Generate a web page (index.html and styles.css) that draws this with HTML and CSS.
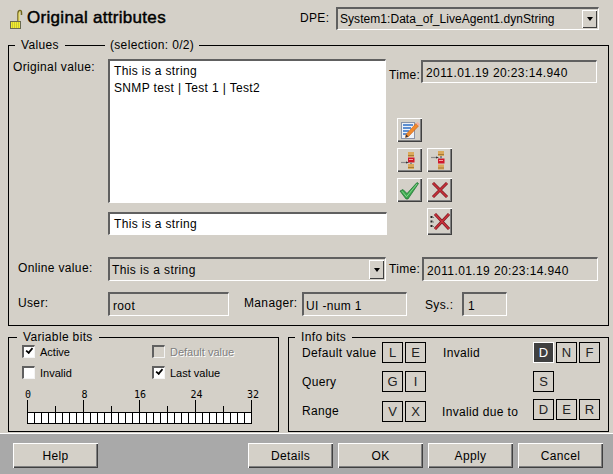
FILE: index.html
```html
<!DOCTYPE html>
<html lang="en">
<head>
<meta charset="utf-8">
<title>Original attributes</title>
<link rel="stylesheet" href="styles.css">
</head>
<body>
<div class="dialog">
  <div class="main">
    <header class="header">
      <svg class="lock" width="14" height="20" viewBox="0 0 14 20">
        <path d="M9 12V4.500C9 2.500 10 1.500 11 1.500S12.500 2.500 12.500 4V6" fill="none" stroke="#6f6420" stroke-width="1.500"/>
        <path d="M10 12V5C10 3.500 10.500 2.500 11.300 2.500" fill="none" stroke="#f6e84a" stroke-width="1"/>
        <rect x="1.500" y="12.500" width="10" height="7" fill="#f2ee30" stroke="#6a6a50"/>
        <path d="M3 14h7M3 16h7M3 18h7" stroke="#a8a430" stroke-width="1" stroke-dasharray="1 1"/>
      </svg>
      <h1 class="title">Original attributes</h1>
      <span class="dpe-label">DPE:</span>
      <div class="combo combo-dpe"><span class="combo-text">System1:Data_of_LiveAgent1.dynString</span><span class="arrow"></span></div>
    </header>

    <section class="group values">
      <div class="legend"><span class="leg-a">Values</span><span class="leg-b">(selection: 0/2)</span></div>
      <div class="row-orig">
        <span class="lbl-orig">Original value:</span>
        <div class="orig-col">
          <div class="textarea"><div>This is a string</div><div>SNMP test | Test 1 | Test2</div></div>
          <div class="input">This is a string</div>
        </div>
        <div class="side">
          <div class="time-row"><span class="lbl-time">Time:</span><div class="field time-field">2011.01.19 20:23:14.940</div></div>
          <div class="tools">
            <button class="tool t-edit" type="button">
              <svg width="25" height="24" viewBox="0 0 25 24">
                <rect x="4.500" y="4.500" width="13" height="16" fill="#eef2f8" stroke="#8a94a8"/>
                <path d="M6 7h10M6 10h8M6 13h6M6 16h4" stroke="#2f6fc4" stroke-width="1.600"/>
                <path d="M9 16.500L19 5.500l2.500 2.500-10 10.500-3 1z" fill="#f08a2c" stroke="#c85a10" stroke-width=".6"/>
                <path d="M19 5.500L20.500 4 23 6.500 21.500 8z" fill="#f4b0a0"/>
                <path d="M8.500 19.500l.7-3 2.200 2z" fill="#333"/>
              </svg>
            </button>
            <span class="tool-gap"></span>
            <button class="tool t-conn1" type="button">
              <svg width="25" height="24" viewBox="0 0 25 24">
                <rect x="11" y="4" width="6" height="5" fill="#dba95a"/>
                <rect x="11" y="7" width="6" height="1" fill="#a67a38"/>
                <rect x="11" y="9.500" width="6.500" height="5" fill="#d0182a"/>
                <rect x="12" y="11" width="4" height="1" fill="#f4a0a0"/>
                <rect x="11" y="16" width="6" height="5" fill="#dba95a"/>
                <rect x="11" y="19" width="6" height="1" fill="#a67a38"/>
                <path d="M14 14.500V16" stroke="#888" stroke-width="2"/>
                <path d="M4 14.500h6" stroke="#8a8a8a" stroke-width="1.200"/>
                <path d="M9 13.500l3 1-3 1z" fill="#333"/>
              </svg>
            </button>
            <button class="tool t-conn2" type="button">
              <svg width="25" height="24" viewBox="0 0 25 24">
                <rect x="11" y="3" width="6" height="5" fill="#dba95a"/>
                <rect x="11" y="6" width="6" height="1" fill="#a67a38"/>
                <rect x="11" y="10.500" width="6.500" height="5" fill="#d0182a"/>
                <rect x="12" y="12" width="4" height="1" fill="#f4a0a0"/>
                <rect x="11" y="16.500" width="6" height="5" fill="#dba95a"/>
                <rect x="11" y="19.500" width="6" height="1" fill="#a67a38"/>
                <path d="M14 8v2.500" stroke="#888" stroke-width="2"/>
                <path d="M4 9.500h6" stroke="#8a8a8a" stroke-width="1.200"/>
                <path d="M9 8.500l3 1-3 1z" fill="#333"/>
              </svg>
            </button>
            <button class="tool t-ok" type="button">
              <svg width="25" height="24" viewBox="0 0 25 24">
                <path d="M3 13l3-1.500 4 4 10-11 1.500 1L11 21h-2z" fill="#3aa84c" stroke="#1c6c30" stroke-width=".7"/>
                <path d="M5 13.200l4.500 5.500L20 6" fill="none" stroke="#a6e4a8" stroke-width=".7"/>
              </svg>
            </button>
            <button class="tool t-x" type="button">
              <svg width="25" height="24" viewBox="0 0 25 24">
                <path d="M6 5l14 14M20 5L6 19" stroke="#7a1c22" stroke-width="3"/>
                <path d="M6 5l14 14M20 5L6 19" stroke="#c8303a" stroke-width="1.600"/>
              </svg>
            </button>
            <span class="tool-gap"></span>
            <button class="tool tool-tall t-xd" type="button">
              <svg width="25" height="27" viewBox="0 0 25 27">
                <path d="M8 6l14 15M22 6L8 21" stroke="#7a1c22" stroke-width="3"/>
                <path d="M8 6l14 15M22 6L8 21" stroke="#cc303a" stroke-width="1.600"/>
                <path d="M4.500 8v2M4.500 12.500v2M4.500 17v2" stroke="#222" stroke-width="2"/>
                <path d="M6.500 9v1M6.500 13.500v1M6.500 18v1" stroke="#777" stroke-width="1"/>
              </svg>
            </button>
          </div>
        </div>
      </div>
      <div class="row-online">
        <span class="lbl-online">Online value:</span>
        <div class="combo combo-online"><span class="combo-text">This is a string</span><span class="arrow"></span></div>
        <span class="lbl-time">Time:</span>
        <div class="field time-field2">2011.01.19 20:23:14.940</div>
      </div>
      <div class="row-user">
        <span class="lbl-user">User:</span>
        <div class="field f-user">root</div>
        <span class="lbl-mgr">Manager:</span>
        <div class="field f-mgr">UI -num 1</div>
        <span class="lbl-sys">Sys.:</span>
        <div class="field f-sys">1</div>
      </div>
    </section>

    <div class="bottom">
      <section class="group varbits">
        <div class="legend legend-var"><span class="leg-a">Variable bits</span></div>
        <div class="checks">
          <label class="check"><span class="box on"></span>Active</label>
          <label class="check off"><span class="box dis"></span>Default value</label>
          <label class="check"><span class="box"></span>Invalid</label>
          <label class="check"><span class="box on"></span>Last value</label>
        </div>
        <svg class="ruler" width="240" height="36" viewBox="0 0 240 36">
          <g class="ruler-text">
            <text x="4" y="9" text-anchor="middle">0</text>
            <text x="60.500" y="9" text-anchor="middle">8</text>
            <text x="116" y="9" text-anchor="middle">16</text>
            <text x="172.500" y="9" text-anchor="middle">24</text>
            <text x="229" y="9" text-anchor="middle">32</text>
          </g>
          <rect x="3.500" y="23.500" width="224" height="11" fill="#fff" stroke="#000"/>
          <path d="M3.500 11v13M59.500 11v13M115.500 11v13M171.500 11v13M227.500 11v13M31.500 17v7M87.500 17v7M143.500 17v7M199.500 17v7" stroke="#000"/>
          <path d="M10.500 24v11M17.500 24v11M24.500 24v11M31.500 24v11M38.500 24v11M45.500 24v11M52.500 24v11M59.500 24v11M66.500 24v11M73.500 24v11M80.500 24v11M87.500 24v11M94.500 24v11M101.500 24v11M108.500 24v11M115.500 24v11M122.500 24v11M129.500 24v11M136.500 24v11M143.500 24v11M150.500 24v11M157.500 24v11M164.500 24v11M171.500 24v11M178.500 24v11M185.500 24v11M192.500 24v11M199.500 24v11M206.500 24v11M213.500 24v11M220.500 24v11" stroke="#000"/>
        </svg>
      </section>

      <section class="group infobits">
        <div class="legend"><span class="leg-a">Info bits</span></div>
        <div class="info-left">
          <div class="info-row"><span class="info-lbl">Default value</span><span class="bit">L</span><span class="bit">E</span></div>
          <div class="info-row r2"><span class="info-lbl">Query</span><span class="bit">G</span><span class="bit">I</span></div>
          <div class="info-row r3"><span class="info-lbl lbl-up">Range</span><span class="bit">V</span><span class="bit">X</span></div>
        </div>
        <div class="info-right">
          <div class="info-row"><span class="info-lbl2">Invalid</span><span class="bit sel">D</span><span class="bit">N</span><span class="bit">F</span></div>
          <div class="info-row r2"><span class="info-lbl2"></span><span class="bit">S</span></div>
          <div class="info-row r3b"><span class="info-lbl2 lbl-down">Invalid due to</span><span class="bit">D</span><span class="bit">E</span><span class="bit">R</span></div>
        </div>
      </section>
    </div>
  </div>

  <footer class="footer">
    <button class="btn btn-help" type="button">Help</button>
    <button class="btn" type="button">Details</button>
    <button class="btn" type="button">OK</button>
    <button class="btn" type="button">Apply</button>
    <button class="btn" type="button">Cancel</button>
  </footer>
</div>
</body>
</html>
```
FILE: styles.css
```css
* { box-sizing: border-box; }
html, body { margin: 0; padding: 0; }
body {
  width: 613px;
  height: 474px;
  overflow: hidden;
  background: #d4d0c8;
  color: #000;
  font-family: "Liberation Sans", Arial, sans-serif;
  font-size: 12px;
  letter-spacing: 0.35px;
}
.dialog { display: flex; flex-direction: column; height: 474px; }
.main { height: 434px; padding-left: 8px; border-bottom: 1px solid #fff; }

/* header */
.header { display: flex; align-items: flex-start; height: 45px; }
.lock { margin: 9px 0 0 1px; flex: none; }
.title {
  margin: 8px 0 0 4px; width: 273px; flex: none;
  font-size: 17px; font-weight: normal; line-height: 20px; letter-spacing: 0.3px;
  -webkit-text-stroke: 0.45px #000;
}
.dpe-label { margin-top: 11px; width: 36px; flex: none; }

/* shared controls */
.field, .input, .textarea, .combo {
  border-style: solid;
  border-width: 2px 1px 1px 2px;
  border-color: #606060 #fff #fff #606060;
}
.field { display: flex; align-items: center; padding: 2px 0 0 2px; height: 24px; }
.combo { display: flex; align-items: center; justify-content: space-between; }
.combo-text { padding-left: 2px; }
.arrow {
  width: 15px;
  height: calc(100% - 2px);
  margin-right: 1px;
  flex: none;
  background: #d4d0c8;
  box-shadow: inset 1px 1px #fff, inset -1px -1px #404040;
  display: flex;
  align-items: center;
  justify-content: center;
}
.arrow::after {
  content: "";
  border-style: solid;
  border-width: 4px 3.500px 0 3.500px;
  border-color: #000 transparent transparent transparent;
}
.combo-dpe { width: 263px; height: 23px; margin-top: 7px; letter-spacing: 0.05px; }

/* groups */
.group { position: relative; border: 1px solid #000; }
.legend { position: absolute; left: 6px; top: -8px; display: flex; line-height: 14px; height: 15px; }
.legend-var { left: 8px; }
.leg-a { background: #d4d0c8; padding: 0 6px; }
.leg-b { background: #d4d0c8; padding: 0 5px; margin-left: 40px; }

.values { width: 601px; height: 281px; margin-bottom: 11px; }
.row-orig { display: flex; padding-top: 13px; height: 201px; }
.lbl-orig { width: 99px; padding-left: 4px; line-height: 16px; flex: none; }
.orig-col { width: 280px; flex: none; }
.textarea { width: 278px; height: 144px; background: #fff; padding: 2px 4px; line-height: 17px; }
.input { width: 279px; height: 23px; margin-top: 9px; background: #fff; padding: 2px 4px; line-height: 16px; }
.side { flex: 1; }
.time-row { display: flex; align-items: flex-start; padding-top: 1px; }
.lbl-time { width: 33px; flex: none; padding-left: 1px; line-height: 16px; margin-top: 7px; }
.time-field { width: 176px; height: 23px; padding-left: 3px; letter-spacing: 0.4px; }
.tools { display: grid; grid-template-columns: 25px 25px; column-gap: 5px; row-gap: 6px; padding: 35px 0 0 9px; }
.tool {
  width: 25px; height: 24px; padding: 0; border: 0; display: block;
  background: #d4d0c8;
  box-shadow: inset 1px 1px #fff, inset -1px -1px #404040, inset -2px -2px #808080;
}
.tool-tall { height: 27px; }
.tool svg { display: block; }

.row-online { display: flex; align-items: flex-start; padding-top: 10px; height: 45px; }
.lbl-online { width: 99px; padding-left: 9px; margin-top: 3px; line-height: 16px; flex: none; }
.combo-online { width: 278px; height: 24px; letter-spacing: 0.4px; }
.row-online .lbl-time { margin-top: 4px; width: 36px; padding-left: 3px; }
.time-field2 { width: 176px; padding-left: 3px; letter-spacing: 0.4px; }

.row-user { display: flex; align-items: flex-start; }
.lbl-user { width: 99px; padding-left: 9px; margin-top: 3px; line-height: 16px; flex: none; }
.f-user { width: 121px; padding-left: 3px; }
.lbl-mgr { width: 73px; padding-left: 15px; margin-top: 3px; line-height: 16px; flex: none; }
.f-mgr { width: 105px; }
.lbl-sys { width: 55px; padding-left: 18px; margin-top: 5px; line-height: 16px; flex: none; }
.f-sys { width: 45px; padding-left: 4px; }

.bottom { display: flex; gap: 9px; }
.varbits { width: 271px; height: 95px; }
.checks { display: grid; grid-template-columns: 130px 120px; row-gap: 8px; padding: 7px 0 0 13px; font-size: 11px; letter-spacing: 0; }
.check { display: flex; align-items: center; gap: 5px; height: 13px; }
.check.off { color: #808080; text-shadow: 1px 1px #fff; }
.box {
  width: 13px; height: 13px; flex: none; position: relative; background: #fff;
  border-style: solid; border-width: 2px 1px 1px 2px; border-color: #606060 #f4f4f4 #f4f4f4 #606060;
}
.box.dis { background: #d4d0c8; }
.box.on::after {
  content: ""; position: absolute; left: 1.500px; top: 0; width: 6px; height: 3px;
  border-left: 2px solid #000; border-bottom: 2px solid #000;
  transform: rotate(-50deg) scale(.85); transform-origin: 50% 70%;
}
.ruler { display: block; margin: 10px 0 0 15px; overflow: visible; }
.ruler-text { font-family: "DejaVu Sans Mono", monospace; font-size: 10px; letter-spacing: 0; }

.infobits { width: 321px; height: 95px; display: flex; padding: 4px 0 0 13px; }
.info-left { width: 141px; flex: none; }
.info-row { display: flex; gap: 2px; align-items: center; }
.info-row.r2 { margin-top: 8px; }
.info-row.r3 { margin-top: 9px; }
.info-row.r3b { margin-top: 7px; }
.info-lbl { width: 78px; flex: none; }
.info-lbl2 { width: 88px; flex: none; }
.lbl-up { margin-bottom: 2px; }
.lbl-down { margin-top: 4px; margin-left: -1px; margin-right: 1px; }
.bit {
  width: 21px; height: 21px; border: 1px solid #000; flex: none;
  display: flex; align-items: center; justify-content: center;
  font-size: 13px; color: #222; letter-spacing: 0;
}
.bit.sel { background: #404040; color: #fff; border-color: #fff; }

/* footer */
.footer { height: 40px; background: #a9a9a9; display: flex; gap: 5px; padding: 9px 0 0 13px; }
.btn {
  width: 85px; height: 25px; padding: 0; border: 0;
  background: #d4d0c8;
  font: inherit; letter-spacing: 0.35px; color: #000;
  box-shadow: inset 1px 1px #fff, inset -1px -1px #404040, inset -2px -2px #808080;
}
.btn-help { margin-right: 145px; }
```
